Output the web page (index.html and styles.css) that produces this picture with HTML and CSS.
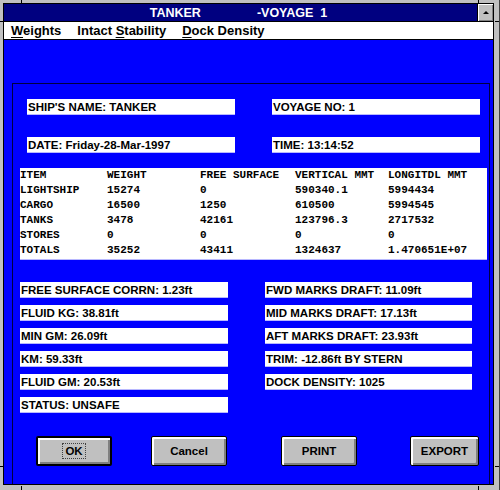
FILE: index.html
```html
<!DOCTYPE html>
<html>
	<head>
		<meta http-equiv="Content-Type" content="text/html; charset=UTF-8">
		<title>TANKER - VOYAGE 1</title>
		<link rel="stylesheet" href="styles.css">
	</head>
	<body>
		<div class="frame">
			<div class="window">
				<div class="titlebar">
					<div class="caption"><span class="shipname">TANKER</span><span>-VOYAGE&nbsp;&nbsp;1</span></div>
					<div class="maxbtn"><span class="arrow"></span></div>
				</div>
				<div class="menubar">
					<span class="menu"><u>W</u>eights</span>
					<span class="menu">Intact <u>S</u>tability</span>
					<span class="menu"><u>D</u>ock Density</span>
				</div>
				<div class="client">
					<div class="panel">
						<div class="header">
							<div class="field">SHIP'S NAME: TANKER</div>
							<div class="field">VOYAGE NO: 1</div>
							<div class="field">DATE: Friday-28-Mar-1997</div>
							<div class="field">TIME: 13:14:52</div>
						</div>

						<div class="table">
							<span>ITEM</span><span>WEIGHT</span><span>FREE SURFACE</span><span>VERTICAL MMT</span><span>LONGITDL MMT</span>
							<span>LIGHTSHIP</span><span>15274</span><span>0</span><span>590340.1</span><span>5994434</span>
							<span>CARGO</span><span>16500</span><span>1250</span><span>610500</span><span>5994545</span>
							<span>TANKS</span><span>3478</span><span>42161</span><span>123796.3</span><span>2717532</span>
							<span>STORES</span><span>0</span><span>0</span><span>0</span><span>0</span>
							<span>TOTALS</span><span>35252</span><span>43411</span><span>1324637</span><span>1.470651E+07</span>
						</div>

						<div class="results">
							<div class="col">
								<div class="field">FREE SURFACE CORRN: 1.23ft</div>
								<div class="field">FLUID KG: 38.81ft</div>
								<div class="field">MIN GM: 26.09ft</div>
								<div class="field">KM: 59.33ft</div>
								<div class="field">FLUID GM: 20.53ft</div>
								<div class="field">STATUS: UNSAFE</div>
							</div>
							<div class="col">
								<div class="field">FWD MARKS DRAFT: 11.09ft</div>
								<div class="field">MID MARKS DRAFT: 17.13ft</div>
								<div class="field">AFT MARKS DRAFT: 23.93ft</div>
								<div class="field">TRIM: -12.86ft BY STERN</div>
								<div class="field">DOCK DENSITY: 1025</div>
							</div>
						</div>

						<div class="buttons">
							<button type="button" class="btn default"><span class="focus">OK</span></button>
							<button type="button" class="btn cancel">Cancel</button>
							<button type="button" class="btn print">PRINT</button>
							<button type="button" class="btn export">EXPORT</button>
						</div>
					</div>
				</div>
			</div>
			<!-- resize marks on the frame -->
			<div class="tick v" style="left: 21px; top: 0;"></div>
			<div class="tick v" style="left: 478px; top: 0;"></div>
			<div class="tick v" style="left: 21px; top: 486px;"></div>
			<div class="tick v" style="left: 478px; top: 486px;"></div>
			<div class="tick h" style="left: 0; top: 21px;"></div>
			<div class="tick h" style="left: 0; top: 466px;"></div>
			<div class="tick h" style="left: 495px; top: 21px;"></div>
			<div class="tick h" style="left: 495px; top: 466px;"></div>
		</div>
	</body>
</html>
```

FILE: styles.css
```css
body {
	margin : 0;
	background-color : #C0C0C0;
	font-family : "Liberation Sans", Arial, sans-serif;
}
.frame {
	position : relative;
	width : 500px;
	height : 490px;
	box-sizing : border-box;
	padding : 3px 5px 5px 3px;
	border-right : 1px solid #404040;
}
.window {
	height : 482px;
	box-sizing : border-box;
	border : 1px solid #000;
	display : flex;
	flex-direction : column;
}
.titlebar {
	display : flex;
	height : 17px;
	border-bottom : 1px solid #000;
}
.caption {
	flex : 1;
	background-color : #000080;
	color : #fff;
	font-size : 12.5px;
	font-weight : bold;
	display : flex;
	justify-content : center;
	align-items : center;
	padding-right : 4px;
}
.shipname {
	margin-right : 56px;
}
.maxbtn {
	width : 15px;
	border-left : 1px solid #000;
	background-color : #C0C0C0;
	box-shadow : inset 1px 1px 0 #fff, inset -1px -1px 0 #808080;
	display : flex;
	justify-content : center;
	align-items : center;
}
.arrow {
	width : 0;
	height : 0;
	border-left : 3px solid transparent;
	border-right : 3px solid transparent;
	border-bottom : 3px solid #000;
	margin-top : -1px;
}
.menubar {
	height : 17px;
	background-color : #fff;
	border-bottom : 1px solid #000;
	display : flex;
	align-items : center;
	padding-left : 7px;
	gap : 16px;
	font-size : 13px;
	font-weight : bold;
}
.menu u {
	text-underline-offset : 2px;
}
.client {
	flex : 1;
	background-color : #0000FF;
	display : flex;
}
.panel {
	flex : 1;
	margin : 43px 3px 0 8px;
	border : 1px solid #000040;
	border-bottom : none;
}
.field {
	height : 15px;
	line-height : 16px;
	background-color : #fff;
	border-bottom : 1px solid #B8B8FF;
	padding-left : 1px;
	font-size : 11.5px;
	font-weight : bold;
	color : #000;
	white-space : nowrap;
}
.header {
	display : grid;
	grid-template-columns : 208px 208px;
	column-gap : 37px;
	row-gap : 22px;
	margin : 15px 0 0 14px;
}
.table {
	display : grid;
	grid-template-columns : 87px 93px 95px 93px 1fr;
	width : 467px;
	margin : 15px 0 0 7px;
	padding-bottom : 1px;
	background-color : #fff;
	border-bottom : 1px solid #B8B8FF;
	font-family : "Liberation Mono", "Courier New", monospace;
	font-size : 11px;
	font-weight : bold;
	line-height : 15px;
	white-space : pre;
}
.results {
	display : flex;
	gap : 37px;
	margin : 22px 0 0 7px;
}
.col {
	display : flex;
	flex-direction : column;
	gap : 7px;
}
.col:first-child {
	width : 208px;
}
.col:last-child {
	width : 207px;
}
.buttons {
	display : flex;
	margin-top : 23px;
	padding-left : 23px;
}
.btn {
	width : 76px;
	height : 30px;
	padding : 0;
	border : 1px solid #000;
	border-radius : 2px;
	background-color : #C0C0C0;
	box-shadow : inset 1px 1px 0 #fff, inset 2px 2px 0 #fff, inset -1px -1px 0 #808080, inset -2px -2px 0 #808080;
	font-family : "Liberation Sans", Arial, sans-serif;
	font-size : 11.5px;
	font-weight : bold;
	color : #000;
}
.btn.default {
	border-width : 2px;
}
.focus {
	outline : 1px dotted #404040;
	outline-offset : 1px;
	padding : 0 1px;
}
.btn.cancel {
	margin-left : 39px;
}
.btn.print {
	margin-left : 54px;
}
.btn.export {
	width : 69px;
	margin-left : 53px;
}
.tick {
	position : absolute;
	background-color : #000;
}
.tick.v {
	width : 1px;
	height : 4px;
}
.tick.h {
	width : 4px;
	height : 1px;
}
```
